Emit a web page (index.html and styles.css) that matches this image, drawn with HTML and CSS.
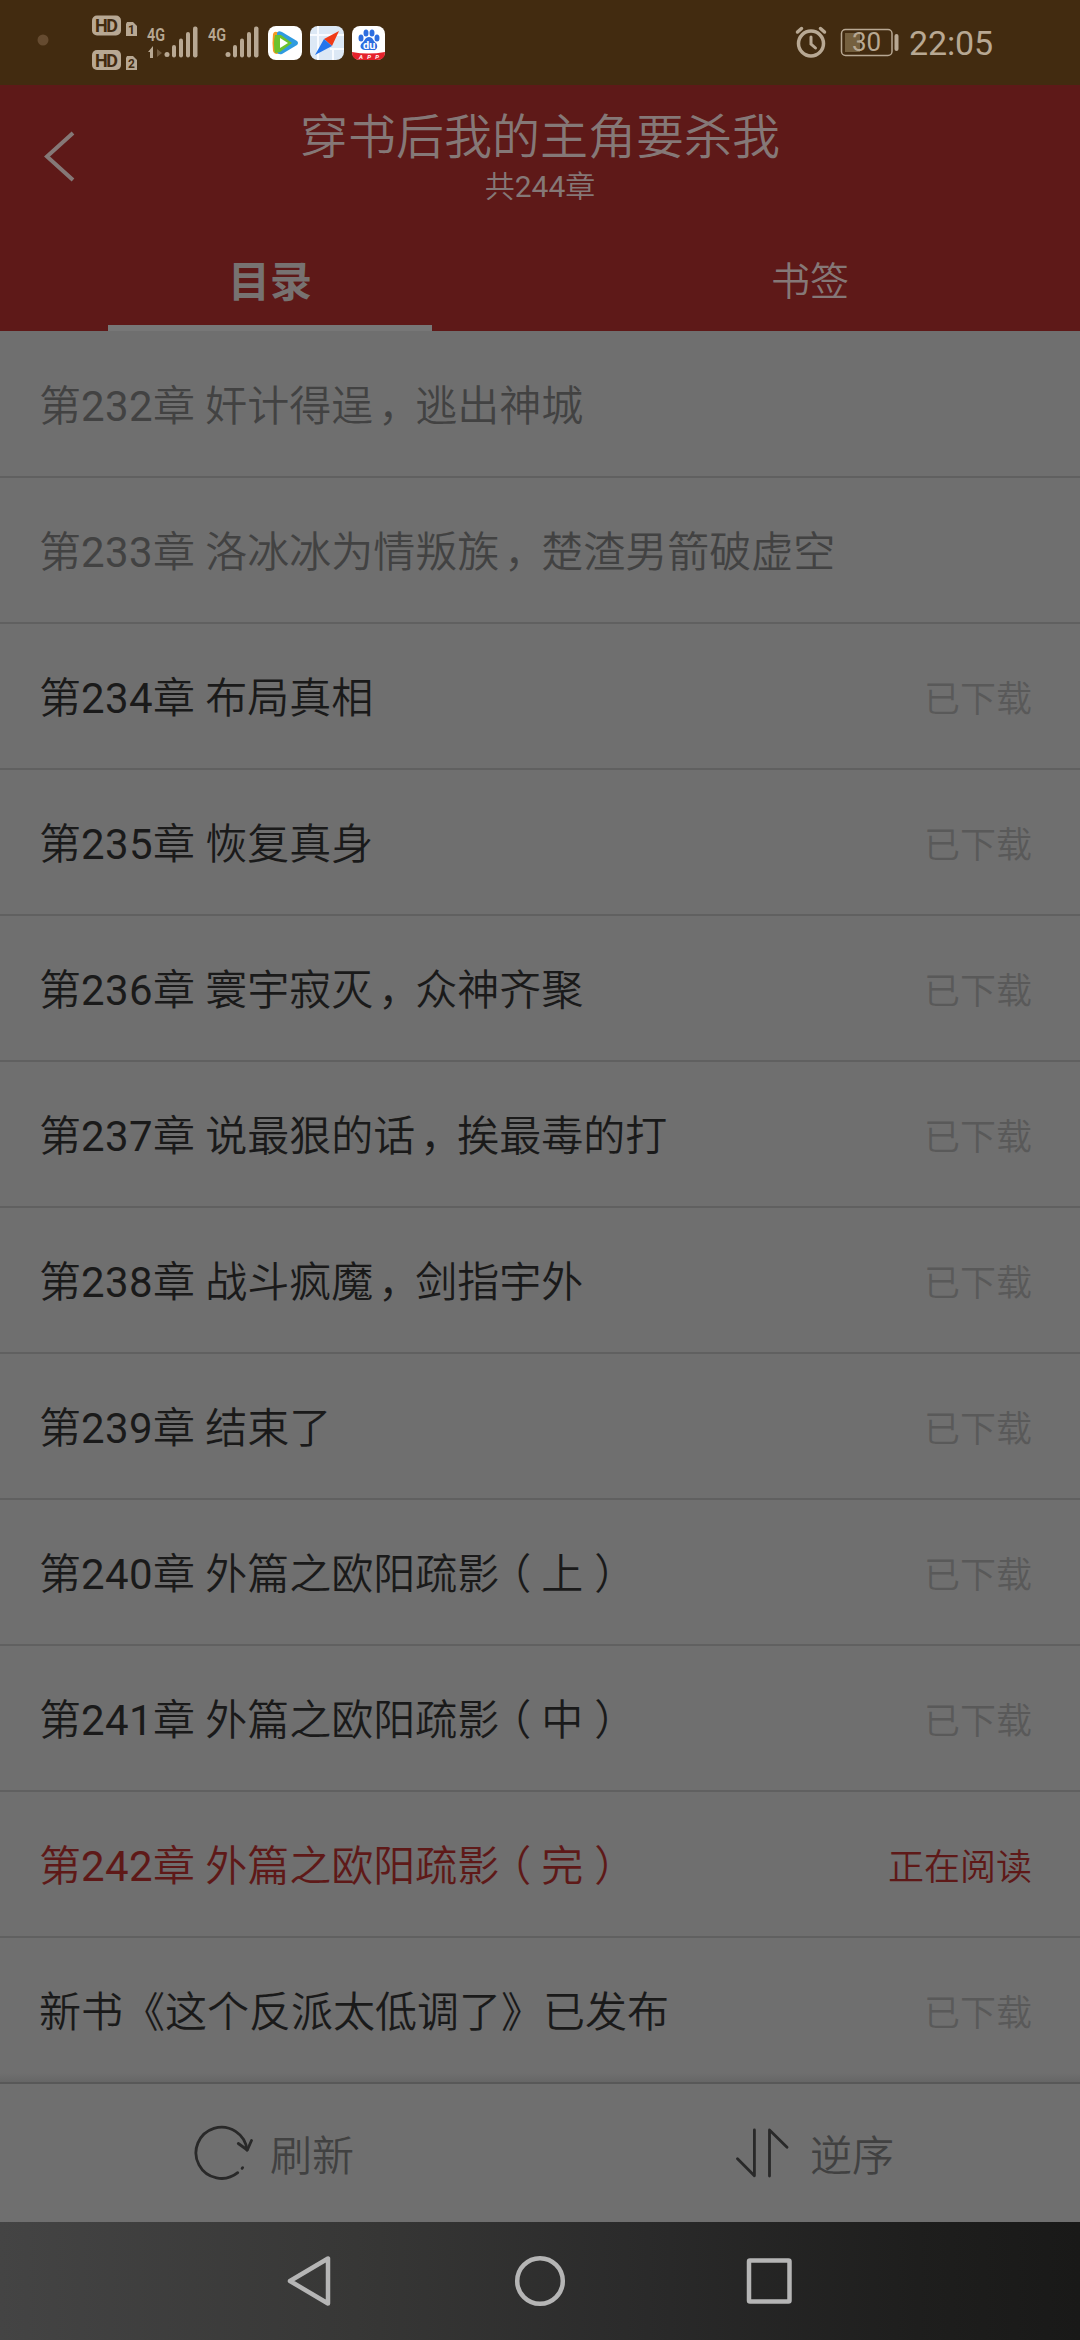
FILE: index.html
```html
<!DOCTYPE html>
<html lang="zh-CN">
<head>
<meta charset="utf-8">
<title>目录</title>
<link rel="stylesheet" href="styles.css">
</head>
<body>
<div class="status-bar">
  <svg class="status-left" width="400" height="84" viewBox="0 0 400 84">
    <circle cx="43" cy="40" r="5.5" fill="#654b30"/>
    <g fill="#b8a893">
      <rect x="92" y="15.500" width="29" height="20" rx="5"/>
      <rect x="92" y="50" width="29" height="20" rx="5"/>
      <path d="M127 22h6l4 4v10h-11v-12z"/>
      <path d="M127 56h6l4 4v10h-11v-12z"/>
      <path d="M148 52l5-6v12h-3v-6z"/>
      <g id="bars">
        <circle cx="167" cy="54.500" r="2.500"/>
        <rect x="172" y="45" width="4" height="12.500" rx="2"/>
        <rect x="179" y="38.500" width="4" height="19" rx="2"/>
        <rect x="186" y="32" width="4" height="25.500" rx="2"/>
        <rect x="193" y="26.500" width="4.500" height="31" rx="2"/>
      </g>
      <use href="#bars" x="61"/>
    </g>
    <path d="M157 49v8l5-4z" fill="#715b40"/>
    <g class="status-hd">
      <text x="95" y="32" textLength="23">HD</text>
      <text x="95" y="66.500" textLength="23">HD</text>
      <text class="status-sim" x="128" y="34">1</text>
      <text class="status-sim" x="128" y="68">2</text>
    </g>
    <g class="status-net">
      <text x="147" y="40.500" textLength="18" lengthAdjust="spacingAndGlyphs">4G</text>
      <text x="208" y="40.500" textLength="18" lengthAdjust="spacingAndGlyphs">4G</text>
    </g>
    <g>
      <rect x="268" y="26" width="34" height="34" rx="8" fill="#fff"/>
      <path d="M273 34q1-3 4-2l8 3v16l-8 3q-3 0-4-3-1-8 0-17z" fill="#f59a22"/>
      <path d="M277 33q1-3 5-1l15 9q2 2 0 4l-15 9q-4 1-5-2z" fill="#2f9be0"/>
      <path d="M275 35l6 0 11 8-12 9-5 1q-2-9 0-18z" fill="#6cc22c"/>
      <path d="M280 38l8 5-8 5z" fill="#fff"/>
    </g>
    <g>
      <rect x="310" y="26" width="34" height="34" rx="8" fill="#dce8f5"/>
      <path d="M318 26v34M310 35h34M333 48v12M330 49h14" stroke="#f8fbff" stroke-width="2"/>
      <path d="M339 31l-15 8 8 7z" fill="#f03a16"/>
      <path d="M315 55l9-16 8 7z" fill="#2375ec"/>
    </g>
    <g>
      <rect x="352" y="26" width="33" height="34" rx="8" fill="#fff"/>
      <path d="M352 52q16 3 33 0q0 8-8 8h-17q-8 0-8-8z" fill="#e5222c"/>
      <g fill="#2d6ee0">
        <ellipse cx="361" cy="38" rx="2.500" ry="3.500"/>
        <ellipse cx="366" cy="33" rx="2.500" ry="3.500"/>
        <ellipse cx="372" cy="33" rx="2.500" ry="3.500"/>
        <ellipse cx="377" cy="38" rx="2.500" ry="3.500"/>
        <path d="M369 37c4 0 4 4 7 6 3 4 0 8-3 7h-8c-4 0-6-4-3-7 3-2 3-6 7-6z"/>
      </g>
      <text class="status-du" x="363" y="49">du</text>
      <text class="status-tag" x="359" y="59" textLength="20">APP</text>
    </g>
  </svg>
  <svg class="status-right" width="320" height="84" viewBox="760 0 320 84">
    <g fill="none" stroke="#b8a893" stroke-linecap="round">
      <circle cx="811" cy="43.500" r="12.500" stroke-width="3.500"/>
      <path d="M811 37v7l4.500 4" stroke-width="3"/>
      <path d="M797.500 32l4-3.500M824.500 32l-4-3.500" stroke-width="3.500"/>
      <rect x="841.500" y="29.500" width="50.500" height="26" rx="4" stroke-width="1.500"/>
    </g>
    <rect x="845" y="33" width="15" height="19" fill="#75603f"/>
    <rect x="894.500" y="34" width="4" height="17" rx="2" fill="#b8a893"/>
    <text class="status-battery" x="852" y="51" textLength="29">30</text>
    <text class="status-time" x="909" y="55" textLength="84">22:05</text>
  </svg>
</div>
<header class="header">
  <div class="title-bar">
    <svg class="back" width="32" height="52" viewBox="0 0 32 52"><path d="M30 3L4 26.500l26 23.500" fill="none" stroke="#857877" stroke-width="4"/></svg>
    <div class="titles">
      <h1 class="book-title">穿书后我的主角要杀我</h1>
      <div class="book-count">共<b>244</b>章</div>
    </div>
  </div>
  <nav class="tabs">
    <div class="tab tab-active">目录</div>
    <div class="tab">书签</div>
  </nav>
</header>
<main class="chapters">
  <div class="chapter chapter-muted"><span>第<b>232</b>章 奸计得逞<i class="comma">，</i>逃出神城</span></div>
  <div class="chapter chapter-muted"><span>第<b>233</b>章 洛冰冰为情叛族<i class="comma">，</i>楚渣男箭破虚空</span></div>
  <div class="chapter"><span>第<b>234</b>章 布局真相</span><span class="state">已下载</span></div>
  <div class="chapter"><span>第<b>235</b>章 恢复真身</span><span class="state">已下载</span></div>
  <div class="chapter"><span>第<b>236</b>章 寰宇寂灭<i class="comma">，</i>众神齐聚</span><span class="state">已下载</span></div>
  <div class="chapter"><span>第<b>237</b>章 说最狠的话<i class="comma">，</i>挨最毒的打</span><span class="state">已下载</span></div>
  <div class="chapter"><span>第<b>238</b>章 战斗疯魔<i class="comma">，</i>剑指宇外</span><span class="state">已下载</span></div>
  <div class="chapter"><span>第<b>239</b>章 结束了</span><span class="state">已下载</span></div>
  <div class="chapter"><span>第<b>240</b>章 外篇之欧阳疏影<i class="paren">（</i>上<i class="paren">）</i></span><span class="state">已下载</span></div>
  <div class="chapter"><span>第<b>241</b>章 外篇之欧阳疏影<i class="paren">（</i>中<i class="paren">）</i></span><span class="state">已下载</span></div>
  <div class="chapter chapter-current"><span>第<b>242</b>章 外篇之欧阳疏影<i class="paren">（</i>完<i class="paren">）</i></span><span class="state">正在阅读</span></div>
  <div class="chapter chapter-last"><span>新书《这个反派太低调了》已发布</span><span class="state">已下载</span></div>
</main>
<footer class="actions">
  <div class="action">
    <svg width="60" height="60" viewBox="0 0 60 60"><g fill="none" stroke="#292929" stroke-width="2.800" stroke-linecap="round" stroke-linejoin="round"><path d="M44.700 49.700A25.600 25.600 0 1 1 54 27"/><path d="M45.300 20.500l9 6.500 4.200-9.500"/><path d="M49.100 45.300l.5-.6"/></g></svg>
    <span>刷新</span>
  </div>
  <div class="action">
    <svg width="60" height="60" viewBox="0 0 60 60"><path d="M4.500 35.700l16.900 17V7M36.500 53V7l17.500 17.200" fill="none" stroke="#292929" stroke-width="2.800" stroke-linecap="round" stroke-linejoin="round"/></svg>
    <span>逆序</span>
  </div>
</footer>
<div class="nav-bar">
  <svg width="1080" height="118" viewBox="0 0 1080 118"><g fill="none" stroke="#b5b5b5" stroke-width="4.500" stroke-linejoin="round"><path d="M328 36.500v45L290 59z"/><circle cx="540" cy="59" r="22.800"/><rect x="749" y="38.500" width="40.500" height="41" rx="1"/></g></svg>
</div>
</body>
</html>
```
FILE: styles.css
```css
* { box-sizing: border-box; }
body {
  margin: 0;
  width: 1080px;
  height: 2340px;
  display: flex;
  flex-direction: column;
  background: #6f6f6f;
  color: #1a1a1a;
  font-family: Roboto, "Noto Sans CJK SC", sans-serif;
  font-weight: 350;
  overflow: hidden;
}
svg { display: block; flex: none; }
b { font-weight: 400; }
i { font-style: normal; }
.status-bar {
  height: 85px;
  display: flex;
  justify-content: space-between;
  background: #422b10;
}
.status-hd { font: 700 18px Roboto, sans-serif; fill: #422b10; }
.status-sim { font-size: 12px; }
.status-net { font: 600 19px Roboto, sans-serif; fill: #b8a893; }
.status-du { font: 700 11px Roboto, sans-serif; fill: #fff; }
.status-tag { font: italic 700 6px Roboto, sans-serif; fill: #fff; }
.status-battery { font: 400 26px Roboto, sans-serif; fill: #b8a893; }
.status-time { font: 400 34px Roboto, sans-serif; fill: #b8a893; }
.header {
  height: 246px;
  background: #5e1918;
  color: #857877;
}
.title-bar {
  height: 146px;
  display: grid;
  grid-template-columns: 120px 1fr 120px;
}
.back { margin: 45px 0 0 43px; }
.titles {
  display: flex;
  flex-direction: column;
  align-items: center;
  padding-top: 24px;
}
.book-title { margin: 0; font-size: 48px; line-height: 58px; font-weight: 350; }
.book-count { font-size: 30px; line-height: 40px; }
.tabs { height: 100px; display: grid; grid-template-columns: 1fr 1fr; }
.tab { height: 100px; font-size: 39px; line-height: 103px; text-align: center; }
.tab-active {
  margin: 0 108px;
  font-size: 42px;
  font-weight: 700;
  border-bottom: 6px solid #777;
  color: #777271;
}
.chapters { height: 1753px; }
.chapter {
  height: 146px;
  padding: 0 48px 3px 39px;
  display: flex;
  align-items: center;
  justify-content: space-between;
  border-bottom: 2px solid #606060;
  font-size: 42px;
  white-space: nowrap;
}
.chapter:first-child { height: 147px; }
.chapter b { letter-spacing: 0.4px; }
.chapter-muted { color: #424242; }
.chapter-current, .chapter-current .state { color: #5e1918; }
.chapter-last {
  border-bottom-color: #585858;
  background: linear-gradient(to top, #666 0, #6f6f6f 9px);
}
/* half-width punctuation, padded back out to a full cell */
.comma, .paren { font-feature-settings: "halt"; }
.comma { margin: 0 16px 0 5px; }
.paren { margin: 0 10px 0 11px; }
.state { padding-top: 2px; font-size: 36px; color: #595959; }
.actions {
  height: 138px;
  display: grid;
  grid-template-columns: 1fr 1fr;
}
.action {
  display: flex;
  align-items: center;
  justify-content: center;
  gap: 17px;
  padding-left: 7px;
  font-size: 42px;
  color: #414141;
}
.action span { padding-bottom: 2px; }
.nav-bar {
  height: 118px;
  background: linear-gradient(90deg, #444 0, #373736 33%, #2a2a2a 60%, #1e1e1d 85%, #191918 100%);
}
```
